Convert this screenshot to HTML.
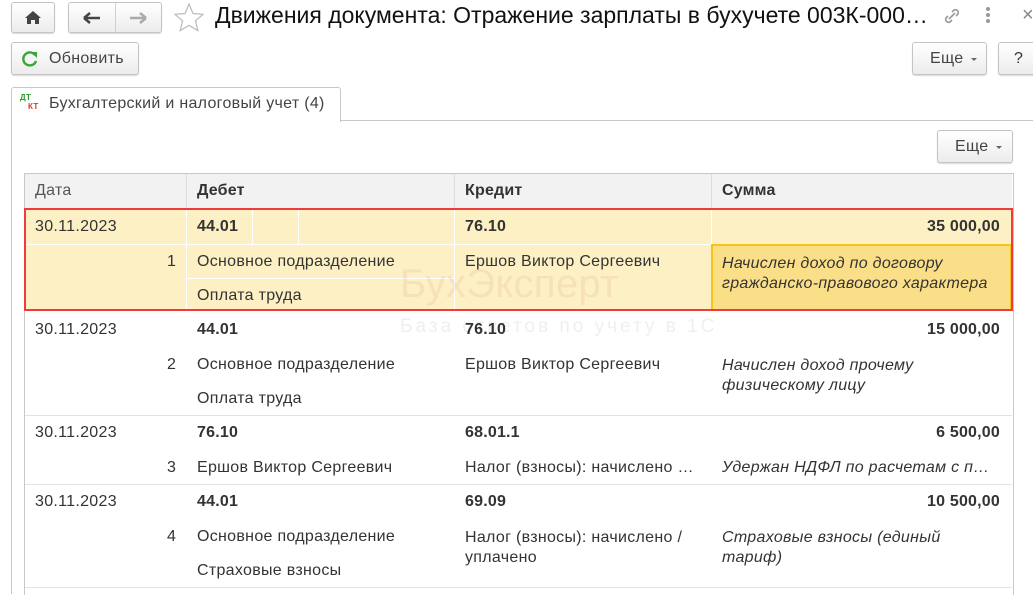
<!DOCTYPE html><html><head><meta charset="utf-8"><style>
body{margin:0;width:1033px;height:594px;background:#fff;position:relative;overflow:hidden;font-family:"Liberation Sans",sans-serif;color:#333;font-size:16px;letter-spacing:0.3px}
.a{position:absolute;white-space:nowrap}
.r{position:absolute;white-space:nowrap;right:33px;text-align:right}
.btn{position:absolute;border:1px solid #c4c4c4;border-radius:3px;background:linear-gradient(#fff,#ececec);box-shadow:0 1px 1px rgba(0,0,0,.15)}
.b{font-weight:bold;letter-spacing:0.2px}.i{font-style:italic}
.hl{position:absolute;height:1px;background:#e2e2e2}
.vl{position:absolute;width:1px;background:#e2e2e2}
.tri{position:absolute;width:0;height:0;border-left:3px solid transparent;border-right:3px solid transparent;border-top:3px solid #666}
</style></head><body>
<div class="btn" style="left:11px;top:2px;width:42px;height:29px"><svg width="42" height="29"><path d="M21 8 L13 15 H15 V21 H19 V17 H23 V21 H27 V15 H29Z" fill="#444"/></svg></div>
<div class="btn" style="left:68px;top:2px;width:92px;height:29px"><div style="position:absolute;left:46px;top:0;width:1px;height:29px;background:#d0d0d0"></div><svg width="92" height="29"><path d="M15 15H31M15 15l6-5M15 15l6 5" stroke="#444" stroke-width="2.5" fill="none"/><path d="M61 15H77M77 15l-6-5M77 15l-6 5" stroke="#aaa" stroke-width="2.5" fill="none"/></svg></div>
<svg class="a" style="left:173px;top:2px" width="32" height="30"><path d="M16 2l4 9.5 10 .8-7.6 6.5 2.4 9.8L16 23.3 7.2 28.6 9.6 18.8 2 12.3l10-.8z" fill="none" stroke="#bbb" stroke-width="1.2"/></svg>
<div class="a" style="left:215px;top:2px;font-size:23px;color:#111;letter-spacing:0">Движения документа: Отражение зарплаты в бухучете 003К-000…</div>
<svg class="a" style="left:940px;top:4px" width="24" height="24"><path d="M9 15l6-6M8 12l-2 2a3 3 0 004 4l2-2M16 12l2-2a3 3 0 00-4-4l-2 2" stroke="#999" stroke-width="1.6" fill="none"/></svg>
<div class="a" style="left:986px;top:7px;width:4px"><div style="width:4px;height:4px;background:#999;border-radius:2px;margin-bottom:2px"></div><div style="width:4px;height:4px;background:#999;border-radius:2px;margin-bottom:2px"></div><div style="width:4px;height:4px;background:#999;border-radius:2px"></div></div>
<div class="a" style="left:1022px;top:4px;font-size:20px;color:#888">×</div>
<div class="btn" style="left:11px;top:42px;width:126px;height:31px"><svg class="a" style="left:9px;top:7px" width="18" height="18"><path d="M14 5A6.5 6.5 0 1 0 15 11" stroke="#3aa635" stroke-width="2.4" fill="none"/><path d="M10 2h6v6z" fill="#3aa635"/></svg><span class="a" style="left:37px;top:7px;color:#444">Обновить</span></div>
<div class="btn" style="left:912px;top:42px;width:73px;height:31px"><span class="a" style="left:17px;top:7px;color:#444">Еще</span><div class="tri" style="left:58px;top:15px"></div></div>
<div class="btn" style="left:998px;top:42px;width:40px;height:31px"><span class="a" style="left:15px;top:7px;color:#333">?</span></div>
<div class="a" style="left:11px;top:87px;width:328px;height:34px;border:1px solid #c8c8c8;border-bottom:none;border-radius:3px 3px 0 0;background:#fff"></div>
<div class="hl" style="left:340px;top:120px;width:693px;background:#c8c8c8"></div>
<div class="vl" style="left:11px;top:120px;height:474px;background:#c8c8c8"></div>
<span class="a" style="left:20px;top:93px;font-size:8px;color:#2a9a2a;font-weight:bold">ДТ</span><span class="a" style="left:28px;top:102px;font-size:8px;color:#d33;font-weight:bold">КТ</span>
<span class="a" style="left:49px;top:95px;color:#444">Бухгалтерский и налоговый учет (4)</span>
<div class="btn" style="left:937px;top:130px;width:74px;height:31px"><span class="a" style="left:17px;top:7px;color:#444">Еще</span><div class="tri" style="left:58px;top:15px"></div></div>
<!-- table -->
<div class="a" style="left:24px;top:173px;width:988px;height:421px;border:1px solid #c8c8c8;border-bottom:none"></div>
<div class="a" style="left:25px;top:174px;width:987px;height:34px;background:#f2f2f2"></div>
<div class="vl" style="left:186px;top:174px;height:34px;background:#ddd"></div><div class="vl" style="left:454px;top:174px;height:34px;background:#ddd"></div><div class="vl" style="left:711px;top:174px;height:34px;background:#ddd"></div>
<span class="a" style="left:35px;top:182px;color:#555">Дата</span><span class="a b" style="left:197px;top:182px">Дебет</span><span class="a b" style="left:465px;top:182px">Кредит</span><span class="a b" style="left:722px;top:182px">Сумма</span>
<div class="a" style="left:25px;top:209px;width:987px;height:101px;background:#fdf0c4"></div>
<div class="a" style="left:711px;top:244px;width:297px;height:63px;background:#fbdf88;border:2px solid #f5c518"></div>
<div class="vl" style="left:186px;top:209px;height:101px;background:#fff"></div><div class="vl" style="left:454px;top:209px;height:101px;background:#fff"></div><div class="vl" style="left:711px;top:209px;height:35px;background:#fff"></div>
<div class="vl" style="left:252px;top:209px;height:35px;background:#fff"></div><div class="vl" style="left:298px;top:209px;height:35px;background:#fff"></div>
<div class="hl" style="left:25px;top:244px;width:686px;background:#fff"></div><div class="hl" style="left:186px;top:278px;width:268px;background:#fff"></div>
<div class="a" style="left:24px;top:208px;width:985px;height:99px;border:2px solid #ee3b3b"></div>
<div class="hl" style="left:25px;top:415px;width:987px"></div><div class="hl" style="left:25px;top:484px;width:987px"></div><div class="hl" style="left:25px;top:587px;width:987px"></div>
<!-- watermark -->
<div class="a" style="left:400px;top:262px;font-size:40px;color:rgba(200,120,100,.12)">БухЭксперт</div>
<div class="a" style="left:400px;top:316px;font-size:19px;letter-spacing:3px;color:rgba(150,150,150,.15)">База ответов по учету в 1С</div>
<!-- rows -->
<span class="a" style="left:35px;top:218px">30.11.2023</span><span class="a b" style="left:197px;top:218px">44.01</span><span class="a b" style="left:465px;top:218px">76.10</span><span class="r b" style="top:218px">35 000,00</span>
<span class="a" style="left:167px;top:253px">1</span><span class="a" style="left:197px;top:253px">Основное подразделение</span><span class="a" style="left:465px;top:253px">Ершов Виктор Сергеевич</span>
<span class="a i" style="left:722px;top:254px;line-height:20px">Начислен доход по договору<br>гражданско-правового характера</span>
<span class="a" style="left:197px;top:287px">Оплата труда</span>
<span class="a" style="left:35px;top:321px">30.11.2023</span><span class="a b" style="left:197px;top:321px">44.01</span><span class="a b" style="left:465px;top:321px">76.10</span><span class="r b" style="top:321px">15 000,00</span>
<span class="a" style="left:167px;top:356px">2</span><span class="a" style="left:197px;top:356px">Основное подразделение</span><span class="a" style="left:465px;top:356px">Ершов Виктор Сергеевич</span>
<span class="a i" style="left:722px;top:356px;line-height:20px">Начислен доход прочему<br>физическому лицу</span>
<span class="a" style="left:197px;top:390px">Оплата труда</span>
<span class="a" style="left:35px;top:424px">30.11.2023</span><span class="a b" style="left:197px;top:424px">76.10</span><span class="a b" style="left:465px;top:424px">68.01.1</span><span class="r b" style="top:424px">6 500,00</span>
<span class="a" style="left:167px;top:459px">3</span><span class="a" style="left:197px;top:459px">Ершов Виктор Сергеевич</span><span class="a" style="left:465px;top:459px">Налог (взносы): начислено …</span><span class="a i" style="left:722px;top:459px">Удержан НДФЛ по расчетам с п…</span>
<span class="a" style="left:35px;top:493px">30.11.2023</span><span class="a b" style="left:197px;top:493px">44.01</span><span class="a b" style="left:465px;top:493px">69.09</span><span class="r b" style="top:493px">10 500,00</span>
<span class="a" style="left:167px;top:528px">4</span><span class="a" style="left:197px;top:528px">Основное подразделение</span><span class="a" style="left:465px;top:528px;line-height:20px">Налог (взносы): начислено /<br>уплачено</span><span class="a i" style="left:722px;top:528px;line-height:20px">Страховые взносы (единый<br>тариф)</span>
<span class="a" style="left:197px;top:562px">Страховые взносы</span>
</body></html>
